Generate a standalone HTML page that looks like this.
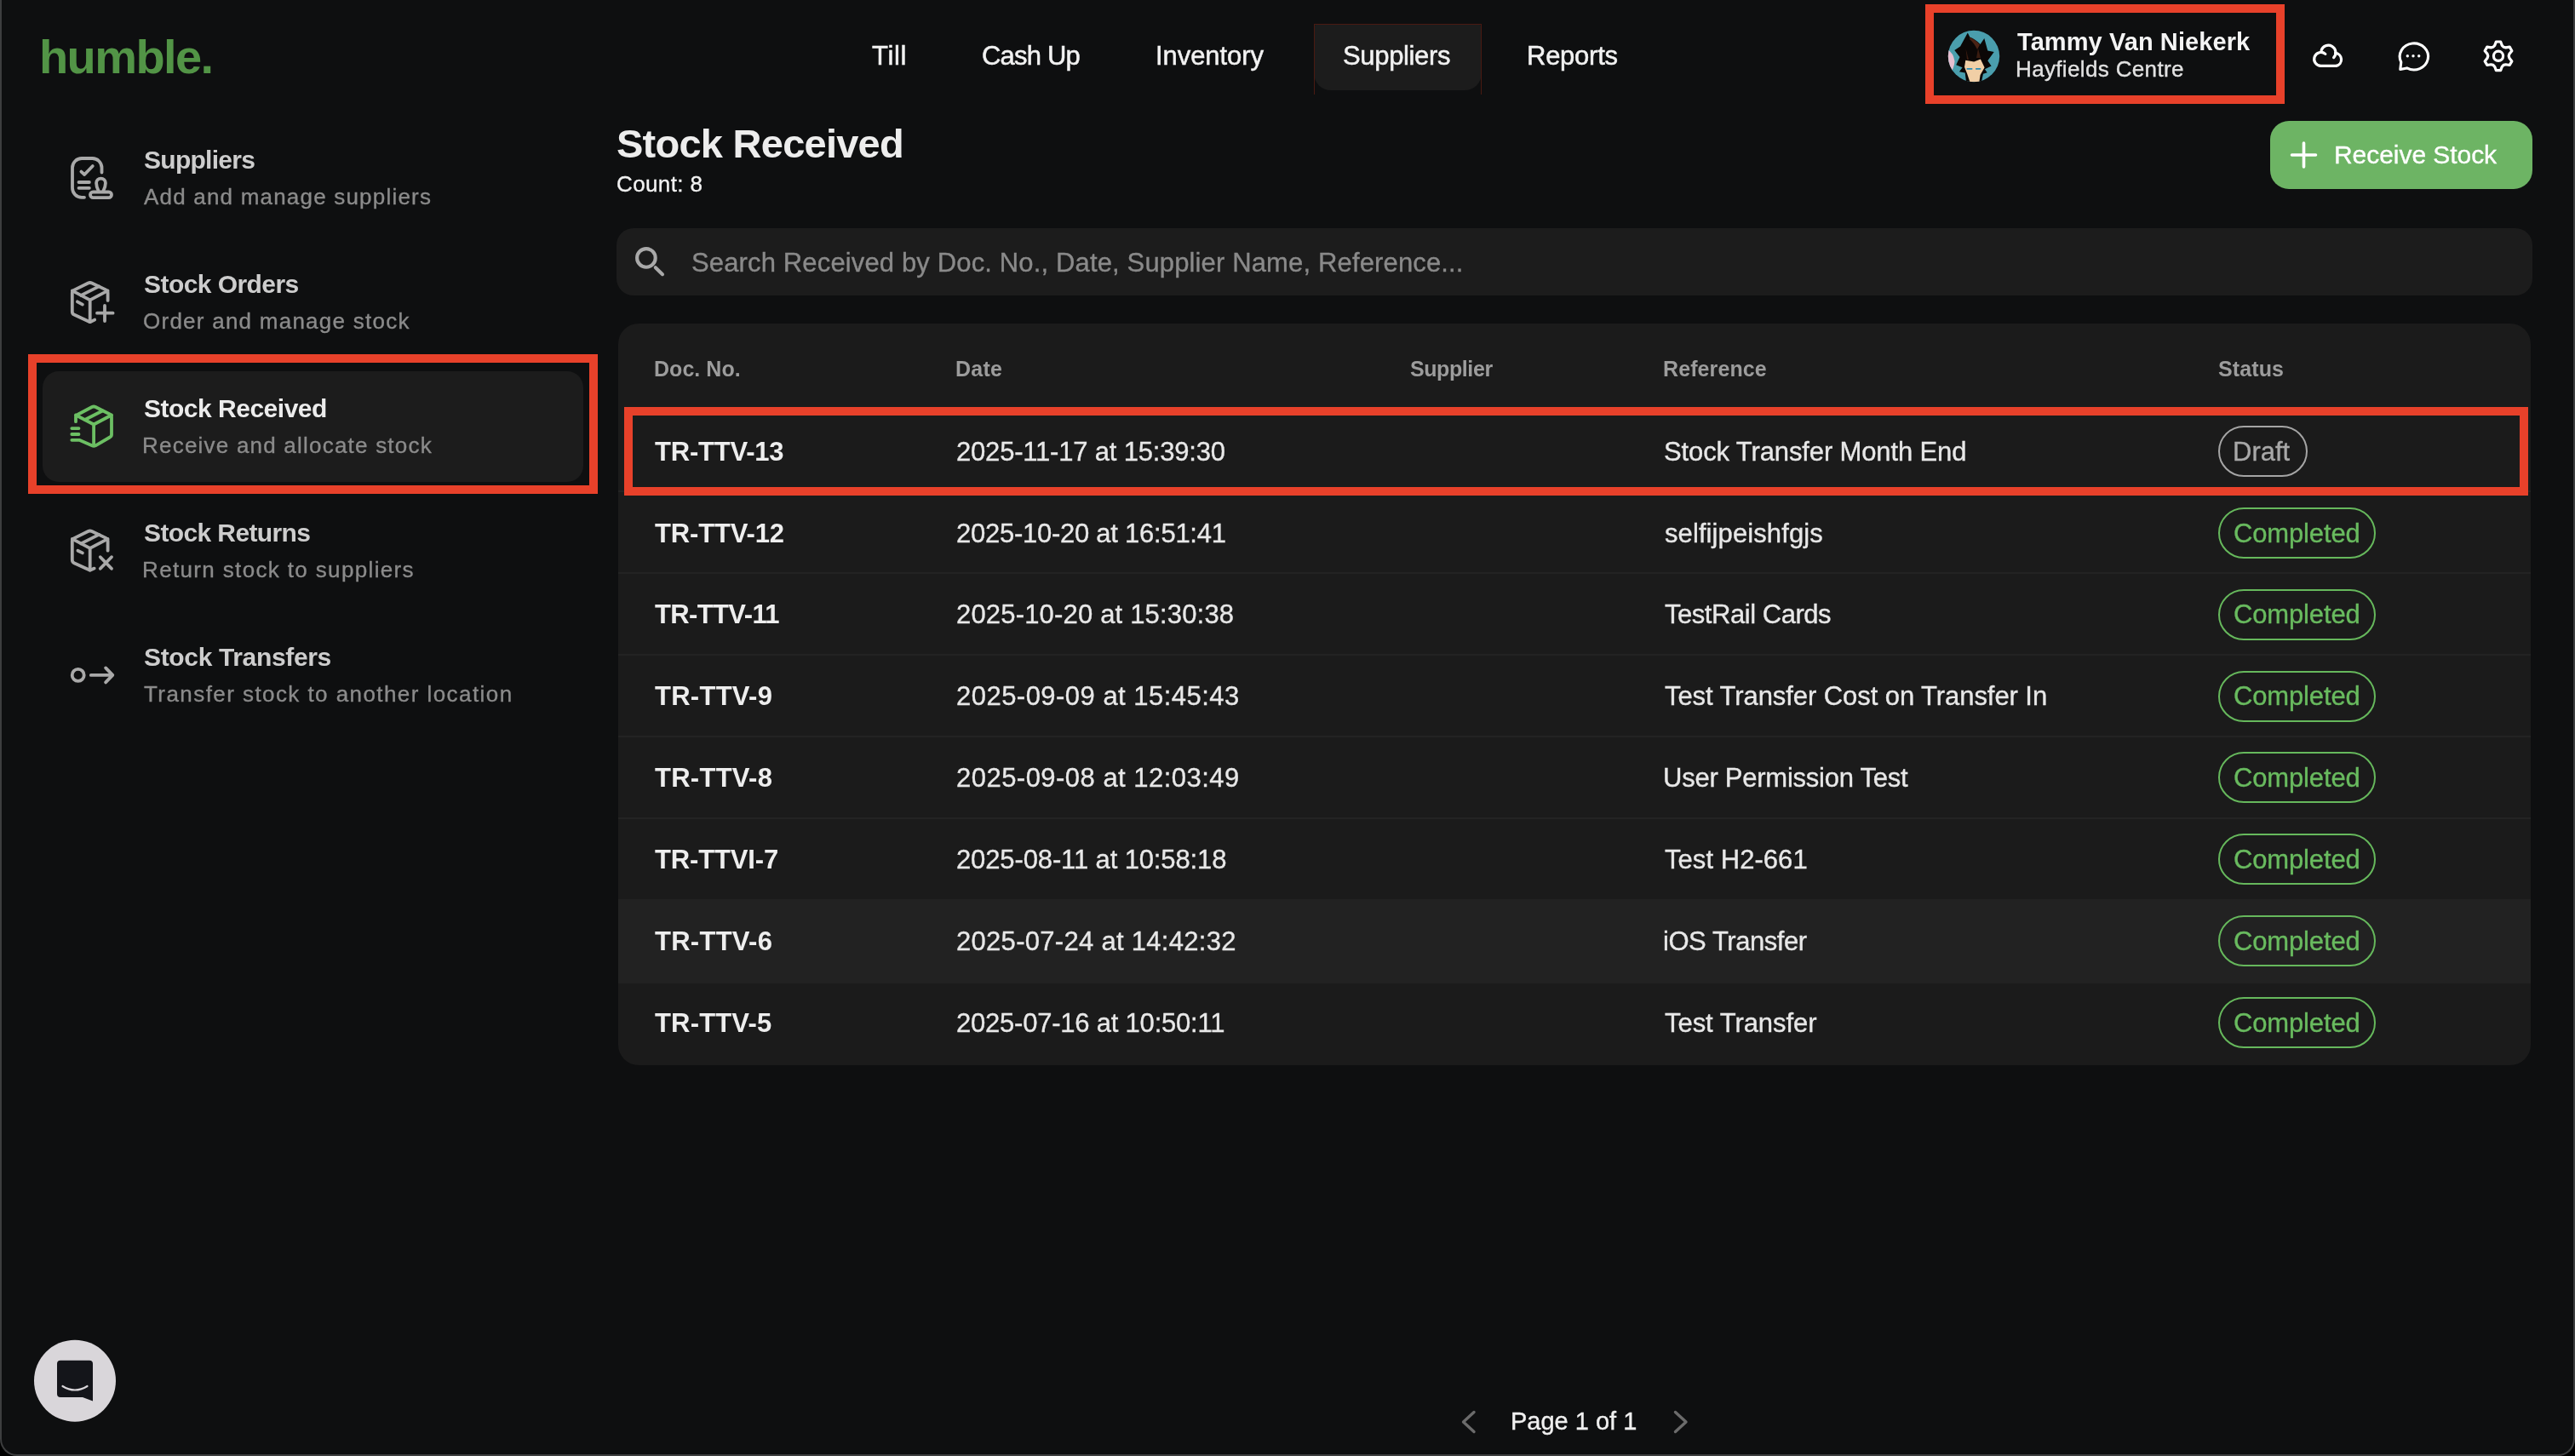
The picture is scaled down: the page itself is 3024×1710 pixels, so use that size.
<!DOCTYPE html>
<html><head><meta charset="utf-8">
<style>
html,body{margin:0;padding:0;width:3024px;height:1710px;overflow:hidden;background:#000;}
body{font-family:"Liberation Sans",sans-serif;position:relative;}
#frame{position:absolute;left:0;top:-20px;width:3020px;height:1728px;background:#0e0f10;border:2px solid #3d3e3f;border-top:none;border-radius:0 0 20px 20px;}
.t{position:absolute;white-space:nowrap;line-height:1;will-change:transform;}
.card{position:absolute;}
.rb{position:absolute;border:10px solid #e8412a;box-sizing:border-box;}
.badge{position:absolute;box-sizing:border-box;height:60px;border-radius:30px;border:2px solid;}
svg{position:absolute;left:0;top:0;}
</style></head>
<body>
<div id="frame"></div>
<div class="t" style="left:46.00px;top:38.60px;font-size:56px;font-weight:bold;color:#529446;letter-spacing:-1.600px;">humble.</div>
<div class="card" style="left:1543px;top:28px;width:197px;height:78px;border-radius:5px 5px 20px 20px;background:#1c1c1c;"></div>
<div style="position:absolute;left:1543px;top:28px;width:197px;height:83px;border:1px solid #4a1a12;border-bottom:none;box-sizing:border-box;"></div>
<div class="t" style="left:1024.25px;top:50.26px;font-size:31px;font-weight:normal;color:#f2f2f2;letter-spacing:0.647px;-webkit-text-stroke:0.5px #f2f2f2;">Till</div>
<div class="t" style="left:1153.25px;top:50.26px;font-size:31px;font-weight:normal;color:#f2f2f2;letter-spacing:-0.811px;-webkit-text-stroke:0.5px #f2f2f2;">Cash Up</div>
<div class="t" style="left:1357.25px;top:50.26px;font-size:31px;font-weight:normal;color:#f2f2f2;letter-spacing:-0.064px;-webkit-text-stroke:0.5px #f2f2f2;">Inventory</div>
<div class="t" style="left:1576.75px;top:50.26px;font-size:31px;font-weight:normal;color:#f2f2f2;letter-spacing:-0.342px;-webkit-text-stroke:0.5px #f2f2f2;">Suppliers</div>
<div class="t" style="left:1793.25px;top:50.26px;font-size:31px;font-weight:normal;color:#f2f2f2;letter-spacing:-0.258px;-webkit-text-stroke:0.5px #f2f2f2;">Reports</div>
<div class="t" style="left:2369.00px;top:35.45px;font-size:29px;font-weight:bold;color:#f4f4f4;letter-spacing:0.077px;">Tammy Van Niekerk</div>
<div class="t" style="left:2367.00px;top:67.99px;font-size:26px;font-weight:normal;color:#e2e2e2;letter-spacing:0.351px;-webkit-text-stroke:0.35px #e2e2e2;">Hayfields Centre</div>
<div class="card" style="left:50px;top:436px;width:635px;height:130px;border-radius:19px;background:#1c1c1c;"></div>
<div class="t" style="left:169.00px;top:172.60px;font-size:30px;font-weight:bold;color:#cdcdcd;letter-spacing:-0.727px;">Suppliers</div>
<div class="t" style="left:169.00px;top:217.99px;font-size:26px;font-weight:normal;color:#8b8b8b;letter-spacing:1.199px;-webkit-text-stroke:0.35px #8b8b8b;">Add and manage suppliers</div>
<div class="t" style="left:169.00px;top:318.60px;font-size:30px;font-weight:bold;color:#cdcdcd;letter-spacing:-0.557px;">Stock Orders</div>
<div class="t" style="left:168.00px;top:363.99px;font-size:26px;font-weight:normal;color:#8b8b8b;letter-spacing:1.250px;-webkit-text-stroke:0.35px #8b8b8b;">Order and manage stock</div>
<div class="t" style="left:169.00px;top:464.60px;font-size:30px;font-weight:bold;color:#ececec;letter-spacing:-0.496px;">Stock Received</div>
<div class="t" style="left:167.00px;top:509.99px;font-size:26px;font-weight:normal;color:#8b8b8b;letter-spacing:1.217px;-webkit-text-stroke:0.35px #8b8b8b;">Receive and allocate stock</div>
<div class="t" style="left:169.00px;top:610.60px;font-size:30px;font-weight:bold;color:#cdcdcd;letter-spacing:-0.616px;">Stock Returns</div>
<div class="t" style="left:167.00px;top:655.99px;font-size:26px;font-weight:normal;color:#8b8b8b;letter-spacing:1.353px;-webkit-text-stroke:0.35px #8b8b8b;">Return stock to suppliers</div>
<div class="t" style="left:169.00px;top:756.60px;font-size:30px;font-weight:bold;color:#cdcdcd;letter-spacing:-0.344px;">Stock Transfers</div>
<div class="t" style="left:169.00px;top:801.99px;font-size:26px;font-weight:normal;color:#8b8b8b;letter-spacing:1.432px;-webkit-text-stroke:0.35px #8b8b8b;">Transfer stock to another location</div>
<div class="t" style="left:723.80px;top:145.21px;font-size:47px;font-weight:bold;color:#ededed;letter-spacing:-0.749px;">Stock Received</div>
<div class="t" style="left:723.50px;top:202.69px;font-size:26px;font-weight:normal;color:#f2f2f2;letter-spacing:0.382px;-webkit-text-stroke:0.35px #f2f2f2;">Count: 8</div>
<div class="card" style="left:2666px;top:142px;width:308px;height:80px;border-radius:22px;background:#6db464;"></div>
<div class="t" style="left:2740.60px;top:167.30px;font-size:30px;font-weight:normal;color:#ffffff;letter-spacing:-0.054px;-webkit-text-stroke:0.35px #ffffff;">Receive Stock</div>
<div class="card" style="left:724px;top:268px;width:2250px;height:79px;border-radius:20px;background:#1c1c1c;"></div>
<div class="t" style="left:812.00px;top:293.26px;font-size:31px;font-weight:normal;color:#8a8a8a;letter-spacing:0.143px;-webkit-text-stroke:0.35px #8a8a8a;">Search Received by Doc. No., Date, Supplier Name, Reference...</div>
<div class="card" style="left:726px;top:380px;width:2246px;height:871px;border-radius:24px;background:#1b1b1b;overflow:hidden;">
<div style="position:absolute;left:0;top:196.36px;width:2246px;height:2px;background:#232323;"></div>
<div style="position:absolute;left:0;top:292.22px;width:2246px;height:2px;background:#232323;"></div>
<div style="position:absolute;left:0;top:388.08px;width:2246px;height:2px;background:#232323;"></div>
<div style="position:absolute;left:0;top:483.94px;width:2246px;height:2px;background:#232323;"></div>
<div style="position:absolute;left:0;top:579.80px;width:2246px;height:2px;background:#232323;"></div>
<div style="position:absolute;left:0;top:675.66px;width:2246px;height:2px;background:#232323;"></div>
<div style="position:absolute;left:0;top:771.52px;width:2246px;height:2px;background:#232323;"></div>
<div style="position:absolute;left:0;top:675.66px;width:2246px;height:99px;background:#222222;"></div>
</div>
<div class="t" style="left:768.00px;top:420.54px;font-size:25px;font-weight:bold;color:#9c9c9c;letter-spacing:0.036px;">Doc. No.</div>
<div class="t" style="left:1122.00px;top:420.54px;font-size:25px;font-weight:bold;color:#9c9c9c;letter-spacing:0.272px;">Date</div>
<div class="t" style="left:1655.60px;top:420.54px;font-size:25px;font-weight:bold;color:#9c9c9c;letter-spacing:-0.412px;">Supplier</div>
<div class="t" style="left:1952.50px;top:420.54px;font-size:25px;font-weight:bold;color:#9c9c9c;letter-spacing:0.101px;">Reference</div>
<div class="t" style="left:2604.70px;top:420.54px;font-size:25px;font-weight:bold;color:#9c9c9c;letter-spacing:0.120px;">Status</div>
<div class="t" style="left:769.40px;top:514.76px;font-size:31px;font-weight:bold;color:#eeeeee;letter-spacing:-0.219px;">TR-TTV-13</div>
<div class="t" style="left:1122.50px;top:514.76px;font-size:31px;font-weight:normal;color:#e8e8e8;letter-spacing:-0.194px;-webkit-text-stroke:0.35px #e8e8e8;">2025-11-17 at 15:39:30</div>
<div class="t" style="left:1953.60px;top:514.76px;font-size:31px;font-weight:normal;color:#e8e8e8;letter-spacing:-0.127px;-webkit-text-stroke:0.35px #e8e8e8;">Stock Transfer Month End</div>
<div class="badge" style="left:2605px;top:500.00px;width:105px;border-color:#a5a5a5;"></div>
<div class="t" style="left:2622.40px;top:514.76px;font-size:31px;font-weight:normal;color:#a8a8a8;letter-spacing:0.009px;-webkit-text-stroke:0.35px #a8a8a8;">Draft</div>
<div class="t" style="left:769.40px;top:610.62px;font-size:31px;font-weight:bold;color:#eeeeee;letter-spacing:-0.156px;">TR-TTV-12</div>
<div class="t" style="left:1122.50px;top:610.62px;font-size:31px;font-weight:normal;color:#e8e8e8;letter-spacing:-0.256px;-webkit-text-stroke:0.35px #e8e8e8;">2025-10-20 at 16:51:41</div>
<div class="t" style="left:1954.60px;top:610.62px;font-size:31px;font-weight:normal;color:#e8e8e8;letter-spacing:0.095px;-webkit-text-stroke:0.35px #e8e8e8;">selfijpeishfgjs</div>
<div class="badge" style="left:2605px;top:595.86px;width:185px;border-color:#66b85c;"></div>
<div class="t" style="left:2623.00px;top:610.62px;font-size:31px;font-weight:normal;color:#69bb5f;letter-spacing:-0.147px;-webkit-text-stroke:0.35px #69bb5f;">Completed</div>
<div class="t" style="left:769.40px;top:706.48px;font-size:31px;font-weight:bold;color:#eeeeee;letter-spacing:-0.630px;">TR-TTV-11</div>
<div class="t" style="left:1122.50px;top:706.48px;font-size:31px;font-weight:normal;color:#e8e8e8;letter-spacing:0.177px;-webkit-text-stroke:0.35px #e8e8e8;">2025-10-20 at 15:30:38</div>
<div class="t" style="left:1954.60px;top:706.48px;font-size:31px;font-weight:normal;color:#e8e8e8;letter-spacing:-0.459px;-webkit-text-stroke:0.35px #e8e8e8;">TestRail Cards</div>
<div class="badge" style="left:2605px;top:691.72px;width:185px;border-color:#66b85c;"></div>
<div class="t" style="left:2623.00px;top:706.48px;font-size:31px;font-weight:normal;color:#69bb5f;letter-spacing:-0.147px;-webkit-text-stroke:0.35px #69bb5f;">Completed</div>
<div class="t" style="left:769.40px;top:802.34px;font-size:31px;font-weight:bold;color:#eeeeee;letter-spacing:0.270px;">TR-TTV-9</div>
<div class="t" style="left:1122.50px;top:802.34px;font-size:31px;font-weight:normal;color:#e8e8e8;letter-spacing:0.472px;-webkit-text-stroke:0.35px #e8e8e8;">2025-09-09 at 15:45:43</div>
<div class="t" style="left:1954.60px;top:802.34px;font-size:31px;font-weight:normal;color:#e8e8e8;letter-spacing:-0.071px;-webkit-text-stroke:0.35px #e8e8e8;">Test Transfer Cost on Transfer In</div>
<div class="badge" style="left:2605px;top:787.58px;width:185px;border-color:#66b85c;"></div>
<div class="t" style="left:2623.00px;top:802.34px;font-size:31px;font-weight:normal;color:#69bb5f;letter-spacing:-0.147px;-webkit-text-stroke:0.35px #69bb5f;">Completed</div>
<div class="t" style="left:769.40px;top:898.20px;font-size:31px;font-weight:bold;color:#eeeeee;letter-spacing:0.270px;">TR-TTV-8</div>
<div class="t" style="left:1122.50px;top:898.20px;font-size:31px;font-weight:normal;color:#e8e8e8;letter-spacing:0.472px;-webkit-text-stroke:0.35px #e8e8e8;">2025-09-08 at 12:03:49</div>
<div class="t" style="left:1952.60px;top:898.20px;font-size:31px;font-weight:normal;color:#e8e8e8;letter-spacing:-0.244px;-webkit-text-stroke:0.35px #e8e8e8;">User Permission Test</div>
<div class="badge" style="left:2605px;top:883.44px;width:185px;border-color:#66b85c;"></div>
<div class="t" style="left:2623.00px;top:898.20px;font-size:31px;font-weight:normal;color:#69bb5f;letter-spacing:-0.147px;-webkit-text-stroke:0.35px #69bb5f;">Completed</div>
<div class="t" style="left:769.40px;top:994.06px;font-size:31px;font-weight:bold;color:#eeeeee;letter-spacing:-0.154px;">TR-TTVI-7</div>
<div class="t" style="left:1122.50px;top:994.06px;font-size:31px;font-weight:normal;color:#e8e8e8;letter-spacing:-0.123px;-webkit-text-stroke:0.35px #e8e8e8;">2025-08-11 at 10:58:18</div>
<div class="t" style="left:1954.60px;top:994.06px;font-size:31px;font-weight:normal;color:#e8e8e8;letter-spacing:0.050px;-webkit-text-stroke:0.35px #e8e8e8;">Test H2-661</div>
<div class="badge" style="left:2605px;top:979.30px;width:185px;border-color:#66b85c;"></div>
<div class="t" style="left:2623.00px;top:994.06px;font-size:31px;font-weight:normal;color:#69bb5f;letter-spacing:-0.147px;-webkit-text-stroke:0.35px #69bb5f;">Completed</div>
<div class="t" style="left:769.40px;top:1089.92px;font-size:31px;font-weight:bold;color:#eeeeee;letter-spacing:0.270px;">TR-TTV-6</div>
<div class="t" style="left:1122.50px;top:1089.92px;font-size:31px;font-weight:normal;color:#e8e8e8;letter-spacing:0.296px;-webkit-text-stroke:0.35px #e8e8e8;">2025-07-24 at 14:42:32</div>
<div class="t" style="left:1952.60px;top:1089.92px;font-size:31px;font-weight:normal;color:#e8e8e8;letter-spacing:-0.439px;-webkit-text-stroke:0.35px #e8e8e8;">iOS Transfer</div>
<div class="badge" style="left:2605px;top:1075.16px;width:185px;border-color:#66b85c;"></div>
<div class="t" style="left:2623.00px;top:1089.92px;font-size:31px;font-weight:normal;color:#69bb5f;letter-spacing:-0.147px;-webkit-text-stroke:0.35px #69bb5f;">Completed</div>
<div class="t" style="left:769.40px;top:1185.78px;font-size:31px;font-weight:bold;color:#eeeeee;letter-spacing:0.170px;">TR-TTV-5</div>
<div class="t" style="left:1122.50px;top:1185.78px;font-size:31px;font-weight:normal;color:#e8e8e8;letter-spacing:-0.218px;-webkit-text-stroke:0.35px #e8e8e8;">2025-07-16 at 10:50:11</div>
<div class="t" style="left:1954.60px;top:1185.78px;font-size:31px;font-weight:normal;color:#e8e8e8;letter-spacing:-0.051px;-webkit-text-stroke:0.35px #e8e8e8;">Test Transfer</div>
<div class="badge" style="left:2605px;top:1171.02px;width:185px;border-color:#66b85c;"></div>
<div class="t" style="left:2623.00px;top:1185.78px;font-size:31px;font-weight:normal;color:#69bb5f;letter-spacing:-0.147px;-webkit-text-stroke:0.35px #69bb5f;">Completed</div>
<div class="t" style="left:1773.80px;top:1655.45px;font-size:29px;font-weight:normal;color:#f0f0f0;letter-spacing:-0.001px;-webkit-text-stroke:0.35px #f0f0f0;">Page 1 of 1</div>
<svg width="3024" height="1710" viewBox="0 0 3024 1710" fill="none" stroke-linecap="round" stroke-linejoin="round">
<!-- suppliers icon -->
<g stroke="#a9a9a9" stroke-width="3.8">
<path d="M99 231.8 H96 a11 11 0 0 1 -11 -11 V197 a11 11 0 0 1 11 -11 H108.5 a11 11 0 0 1 11 11 V202.5"/>
<path d="M95.4 201.6 L99.2 205 L108.8 195"/>
<path d="M92.5 214 H104.9 M92.5 220.8 H104.9"/>
<path d="M115.6 224 C113.6 220 113.1 217.5 113.1 215 a5.4 5.4 0 0 1 10.8 0 C123.9 217.5 123.4 220 121.4 224"/>
<path d="M109.3 225.5 H127.7 a3.3 3.3 0 0 1 0 6.6 H109.3 a3.3 3.3 0 0 1 0 -6.6 Z"/>
</g>
<!-- stock orders icon -->
<g stroke="#a9a9a9" stroke-width="3.8">
<path d="M111.2 375.6 L105.7 378.2 L87 369.6 Q84.8 368.6 84.8 366 V344 Q84.8 341.8 87 340.6 L103.5 332.5 Q105.7 331.5 107.9 332.5 L124.4 340.4 Q126.6 341.5 126.6 344 V352.9"/>
<path d="M84.8 341.4 L105.7 352.4 L126.6 341.4 M105.7 352.4 V378"/>
<path d="M95.2 346.9 L116.2 336.4"/>
<path d="M90.9 354.3 L96.9 357.6"/>
<path d="M123 359 V377 M114 367.7 H132.6"/>
</g>
<!-- stock received icon (green) -->
<g stroke="#6cbf63" stroke-width="3.8">
<path d="M89 495.2 V490 Q89 488 91 487 L108 478 Q110.1 477 112.2 478 L129 486.5 Q131 487.5 131 490 V510.5 Q131 512.5 129 513.5 L112.2 523.3 Q110.1 524.3 108 523.3 L93.1 516.8 H84.3"/>
<path d="M89 487.5 L110.1 498.5 L131 487.5 M110.1 498.5 V523"/>
<path d="M99.7 493 L120.3 482.5"/>
<path d="M84.3 503.1 H92.5 M84.3 510 H92.5"/>
</g>
<!-- stock returns icon -->
<g stroke="#a9a9a9" stroke-width="3.8">
<path d="M110.7 667.6 L105.7 669.7 L87 661.2 Q84.8 660.2 84.8 657.6 V635.5 Q84.8 633.3 87 632.1 L103.5 624 Q105.7 623 107.9 624 L124.4 631.9 Q126.6 633 126.6 635.5 V646.7"/>
<path d="M84.8 632.9 L105.7 643.9 L126.6 632.9 M105.7 643.9 V669.5"/>
<path d="M95.2 638.4 L116.2 627.9"/>
<path d="M91.4 646.7 L96.9 649.4"/>
<path d="M117.8 654.2 L131 667.8 M131 654.2 L117.8 667.8"/>
</g>
<!-- stock transfers icon -->
<g stroke="#a9a9a9" stroke-width="3.8">
<circle cx="91.7" cy="792.9" r="7"/>
<path d="M106.8 792.9 H131.5 M124.1 784.4 L132.3 792.9 L124.1 801.4"/>
</g>
<!-- search icon -->
<g stroke="#a9a9a9" stroke-width="4.1">
<circle cx="758.9" cy="302.9" r="10.8"/>
<path d="M769.8 314.2 L778 322.2"/>
</g>
<!-- plus on button -->
<path d="M2705.5 168 V196 M2691.5 182 H2719.5" stroke="#ffffff" stroke-width="3.6"/>
<!-- cloud -->
<g stroke="#ffffff" stroke-width="3.2">
<path d="M2743.3 77.4 H2725.5 A7.95 7.95 0 1 1 2730.8 63.4"/>
<path d="M2726.1 59.2 A8.6 8.6 0 1 1 2740.6 67.6"/>
<path d="M2742.6 62.4 A7.6 7.6 0 0 1 2743.6 77.4"/>
</g>
<!-- chat -->
<path d="M2826.6 79.9 A16.65 15.55 0 1 0 2819.8 73.0 L2818.8 81.4 Z" stroke="#ffffff" stroke-width="3.1"/>
<g fill="#ffffff"><circle cx="2827.3" cy="65.8" r="1.7"/><circle cx="2834" cy="65.8" r="1.7"/><circle cx="2840.7" cy="65.8" r="1.7"/></g>
<!-- gear -->
<g stroke="#ffffff" stroke-width="3.2">
<path d="M2929.70 53.32 L2931.34 49.01 L2936.66 49.01 L2938.30 53.32 L2940.10 55.23 L2942.66 55.84 L2947.21 55.10 L2949.87 59.71 L2946.96 63.28 L2946.20 65.80 L2946.96 68.32 L2949.87 71.89 L2947.21 76.50 L2942.66 75.76 L2940.10 76.37 L2938.30 78.28 L2936.66 82.59 L2931.34 82.59 L2929.70 78.28 L2927.90 76.37 L2925.34 75.76 L2920.79 76.50 L2918.13 71.89 L2921.04 68.32 L2921.80 65.80 L2921.04 63.28 L2918.13 59.71 L2920.79 55.10 L2925.34 55.84 L2927.90 55.23 Z"/>
<circle cx="2934" cy="65.8" r="5.6"/>
</g>
<!-- pagination chevrons -->
<g stroke="#6b6b6b" stroke-width="3.4">
<path d="M1731 1658.5 L1718.5 1670 L1731 1681.5"/>
<path d="M1967.5 1658.5 L1980 1670 L1967.5 1681.5"/>
</g>
<!-- avatar -->
<defs><clipPath id="av"><circle cx="2318" cy="66" r="30.2"/></clipPath></defs>
<circle cx="2318" cy="66" r="30.2" fill="#4a9ead"/>
<g clip-path="url(#av)">
<path d="M2287 58 Q2294 62 2295.5 72 Q2295 80 2290 86 L2286 86 Z" fill="#e6bfd0"/>
<path d="M2310.8 38.5 L2313.3 43.5 Q2320 46 2325.6 52.1 L2330.3 45 L2334.3 59.6 L2341.7 61.1 L2334.3 71.3 L2338.6 77.5 L2330.9 81.2 L2333.7 85.2 L2329 86.7 L2327 96 L2309 96 L2307.7 85.5 L2300.9 84.3 L2304.6 79.3 L2297.2 76.2 L2301.5 67 L2295.3 58.9 L2302.1 54.6 Z" fill="#0b0706"/>
<path d="M2313.3 44 Q2320 46.5 2325 52.5 L2322 58 Q2318 50 2313 46 Z" fill="#4b2315"/>
<path d="M2308.5 57 L2312 70 L2310 70 Z" fill="#3a1c10"/>
<path d="M2323 57 L2326 68 L2321 68 Z" fill="#3a1c10"/>
<path d="M2308.3 70.7 L2318.2 72.5 L2325.9 69.4 L2330.6 79.3 L2325.6 88 L2324.4 96 L2313.3 96 L2310.2 86.7 L2307 78.7 Z" fill="#f1cfa6"/>
<path d="M2310.2 80.9 L2315.7 80.9 M2320.7 80.9 L2325.6 80.9" stroke="#2a8db8" stroke-width="1.6"/>
</g>
<!-- intercom -->
<circle cx="88" cy="1621.7" r="48" fill="#d9d6da"/>
<path d="M71 1597.7 H105 Q109 1597.7 109 1601.7 V1645.6 L97 1641 H71 Q67 1641 67 1637 V1601.7 Q67 1597.7 71 1597.7 Z" fill="#14151a"/>
<path d="M73.5 1628 Q88 1637 102.5 1628" stroke="#d9d6da" stroke-width="2.2"/>
</svg>
<div class="rb" style="left:2261px;top:5px;width:422px;height:117px;"></div>
<div class="rb" style="left:33px;top:416px;width:669px;height:164px;"></div>
<div class="rb" style="left:733px;top:478px;width:2236px;height:104px;"></div>
</body></html>
